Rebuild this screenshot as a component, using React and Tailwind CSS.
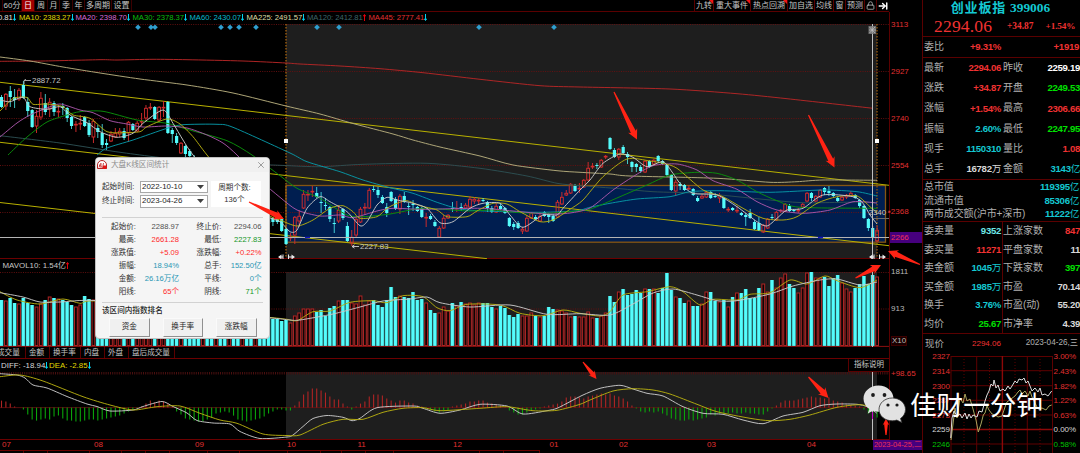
import clsx from 'clsx';
import { Lock, ArrowRightToLine, X } from 'lucide-react';

const STEP = 4.378;
const xOf = (i) => 1.5 + i * STEP;

// [rising, high, open/close top, open/close bottom, low] in chart units
const candles = [
    [0, 95, 97, 107, 108], [1, 93, 94, 106, 110], [0, 86, 91, 97, 107], [0, 89, 97, 100, 108], [1, 88, 90, 99, 101],
    [0, 81, 85, 98, 99], [0, 97, 102, 111, 117], [0, 109, 110, 127, 128], [1, 110, 116, 126, 133], [1, 92, 98, 117, 120],
    [0, 94, 103, 112, 115], [1, 98, 102, 109, 117], [0, 101, 103, 112, 116], [1, 106, 111, 112, 117], [0, 103, 106, 108, 115],
    [0, 107, 108, 118, 122], [0, 116, 117, 126, 129], [1, 121, 124, 125, 132], [1, 115, 123, 124, 130], [0, 116, 117, 126, 127],
    [0, 120, 123, 135, 137], [1, 119, 121, 137, 143], [0, 125, 128, 132, 138], [0, 124, 133, 145, 148], [0, 139, 143, 145, 150],
    [1, 131, 134, 141, 142], [1, 128, 133, 137, 138], [1, 128, 131, 134, 137], [0, 128, 131, 138, 140], [1, 121, 122, 133, 142],
    [0, 123, 124, 130, 131], [1, 121, 123, 131, 132], [1, 113, 121, 122, 126], [1, 105, 108, 118, 122], [1, 103, 107, 108, 110],
    [0, 106, 107, 119, 120], [1, 106, 107, 120, 122], [1, 101, 107, 108, 117], [0, 101, 102, 133, 134], [0, 128, 130, 134, 143],
    [0, 133, 136, 143, 145], [1, 142, 143, 153, 154], [0, 145, 146, 154, 157], [0, 149, 151, 156, 160], [0, 155, 158, 164, 166],
    [0, 161, 163, 170, 172], [1, 164, 166, 170, 173], [0, 165, 167, 176, 178], [0, 172, 174, 180, 183], [1, 172, 176, 182, 184],
    [0, 175, 178, 186, 188], [0, 183, 185, 190, 194], [1, 182, 185, 191, 193], [0, 187, 189, 197, 199], [0, 194, 196, 204, 206],
    [1, 196, 199, 203, 205], [0, 198, 201, 209, 211], [0, 205, 208, 214, 216], [1, 208, 210, 214, 217], [0, 210, 212, 218, 220],
    [0, 213, 215, 220, 222], [0, 216, 218, 223, 225], [0, 217, 218, 222, 226], [0, 217, 219, 222, 224], [0, 217, 219, 231, 232],
    [0, 228, 229, 244, 245], [1, 233, 237, 238, 241], [1, 216, 217, 235, 244], [1, 210, 216, 221, 227], [1, 190, 194, 208, 209],
    [1, 190, 194, 195, 201], [1, 186, 191, 192, 197], [0, 187, 193, 197, 198], [0, 192, 202, 203, 213], [0, 198, 205, 206, 210],
    [0, 206, 207, 219, 222], [0, 218, 223, 224, 233], [1, 205, 210, 221, 223], [0, 208, 209, 218, 220], [0, 222, 226, 241, 242],
    [1, 230, 237, 243, 246], [1, 217, 219, 235, 237], [1, 207, 209, 222, 223], [1, 203, 207, 208, 215], [1, 188, 190, 208, 209],
    [0, 186, 189, 190, 192], [0, 187, 190, 195, 198], [0, 195, 197, 203, 204], [0, 203, 207, 213, 217], [0, 191, 192, 201, 202],
    [0, 197, 199, 209, 210], [1, 194, 196, 209, 214], [0, 192, 196, 202, 203], [0, 203, 206, 207, 215], [0, 200, 204, 205, 211],
    [0, 206, 207, 211, 212], [0, 207, 208, 217, 218], [1, 213, 217, 218, 227], [0, 214, 216, 219, 220], [0, 220, 222, 226, 227],
    [1, 226, 228, 237, 238], [1, 215, 218, 228, 229], [1, 214, 215, 218, 219], [0, 202, 208, 209, 212], [1, 201, 208, 209, 212],
    [0, 203, 207, 208, 211], [1, 203, 205, 208, 209], [1, 196, 199, 207, 208], [1, 197, 199, 201, 204], [1, 198, 200, 201, 205],
    [0, 198, 200, 201, 202], [0, 201, 202, 208, 212], [0, 206, 208, 212, 213], [1, 203, 206, 212, 213], [0, 204, 206, 209, 210],
    [0, 207, 208, 213, 214], [0, 217, 218, 226, 227], [0, 222, 224, 227, 230], [0, 221, 223, 228, 229], [1, 227, 229, 231, 234],
    [1, 215, 218, 231, 232], [1, 212, 213, 218, 219], [0, 215, 217, 219, 220], [1, 212, 216, 221, 222], [0, 211, 212, 216, 217],
    [0, 213, 215, 217, 223], [0, 214, 216, 221, 222], [1, 200, 202, 217, 218], [1, 192, 197, 204, 205], [1, 190, 193, 195, 196],
    [1, 183, 184, 193, 194], [0, 184, 186, 191, 192], [1, 183, 188, 189, 193], [1, 179, 180, 187, 188], [1, 162, 168, 180, 181],
    [1, 163, 166, 167, 169], [0, 163, 165, 166, 169], [1, 159, 160, 167, 168], [1, 155, 156, 157, 159], [0, 137, 138, 149, 150],
    [0, 148, 150, 157, 158], [1, 148, 149, 157, 160], [0, 145, 147, 153, 154], [0, 152, 154, 157, 164], [0, 161, 162, 167, 172],
    [0, 163, 164, 167, 172], [0, 165, 167, 171, 173], [1, 160, 161, 172, 173], [0, 160, 161, 167, 168], [1, 159, 160, 164, 165],
    [0, 155, 156, 161, 162], [0, 160, 161, 164, 165], [0, 164, 165, 175, 177], [0, 174, 175, 190, 191], [1, 180, 182, 191, 196],
    [0, 182, 184, 186, 190], [0, 184, 185, 190, 191], [1, 185, 188, 189, 190], [0, 188, 189, 195, 196], [0, 196, 198, 201, 202],
    [1, 193, 196, 198, 199], [1, 191, 192, 197, 198], [0, 191, 192, 198, 199], [0, 193, 196, 197, 198], [1, 193, 195, 198, 203],
    [0, 197, 198, 208, 209], [1, 207, 209, 210, 212], [0, 207, 208, 210, 211], [1, 206, 210, 211, 213], [0, 212, 213, 215, 216],
    [0, 213, 215, 217, 226], [0, 209, 213, 218, 219], [0, 220, 222, 229, 230], [0, 217, 223, 230, 231], [1, 224, 225, 232, 233],
    [1, 218, 219, 228, 229], [0, 214, 217, 218, 220], [1, 211, 212, 220, 221], [1, 209, 210, 211, 213], [1, 203, 204, 211, 212],
    [0, 204, 206, 211, 212], [0, 209, 210, 211, 213], [1, 208, 210, 211, 213], [1, 203, 204, 207, 208], [1, 192, 193, 201, 202],
    [0, 192, 193, 198, 201], [1, 195, 196, 201, 202], [1, 189, 190, 197, 198], [0, 187, 188, 192, 195], [0, 186, 191, 193, 196],
    [0, 192, 193, 196, 197], [0, 196, 198, 201, 202], [1, 196, 197, 200, 201], [1, 194, 195, 197, 199], [1, 191, 193, 196, 197],
    [0, 194, 195, 198, 199], [0, 199, 200, 206, 208], [0, 205, 206, 218, 219], [0, 218, 219, 228, 231], [0, 226, 228, 238, 240],
    [1, 226, 230, 241, 242],
];

const volumes = [
    46, 45, 48, 43, 42, 48, 43, 41, 39, 42, 46, 49, 48, 47, 46, 44, 41, 39, 41, 50, 47, 46, 40, 44, 42, 38, 36, 39, 35, 37,
    34, 38, 36, 40, 37, 33, 35, 42, 46, 40, 38, 35, 33, 36, 32, 30, 31, 33, 29, 27, 30, 28, 26, 29, 31, 27, 25, 27, 26, 28,
    27, 28, 27, 27, 25, 26, 23, 30, 33, 37, 37, 37, 34, 36, 30, 38, 40, 45, 46, 46, 43, 42, 50, 41, 45, 46, 41, 39, 46, 59,
    49, 50, 49, 48, 54, 46, 47, 43, 36, 33, 33, 39, 35, 43, 40, 44, 42, 43, 41, 43, 43, 43, 39, 37, 40, 38, 31, 29, 32, 30,
    30, 33, 30, 29, 30, 39, 37, 36, 35, 33, 29, 30, 29, 29, 34, 28, 28, 30, 33, 50, 44, 54, 57, 51, 52, 56, 53, 57, 57, 57,
    53, 58, 73, 56, 49, 48, 43, 45, 40, 40, 42, 54, 54, 45, 44, 46, 39, 49, 53, 53, 57, 48, 48, 58, 62, 54, 66, 58, 68, 72,
    62, 58, 53, 58, 73, 74, 68, 68, 69, 60, 68, 71, 63, 57, 54, 58, 62, 70, 62, 71, 69,
];

const macd = [
    7, 6, 4, 1, 0, -2, -7, -12, -13, -12, -11, -12, -9, -8, -11, -13, -13, -14, -14, -13, -12, -12, -13, -12, -11, -10, -9, -8, -6, -4,
    -2, -1, 1, 4, 7, 5, 7, 6, 4, 1, -4, -7, -11, -12, -13, -14, -14, -12, -10, -6, -5, -4, -5, -8, -12, -13, -14, -13, -12, -11,
    -9, -6, -4, -2, -2, -3, -3, 2, 6, 13, 16, 19, 19, 17, 15, 11, 8, 8, 4, 1, -2, 1, 4, 6, 11, 13, 13, 12, 9, 7,
    5, 7, 7, 5, 4, 2, 1, -1, -2, -4, -5, -4, -3, 1, 2, 3, 4, 6, 6, 7, 7, 5, 4, 3, 2, 1, -3, -5, -7, -7,
    -5, -3, -2, -1, 1, 2, 3, 4, 6, 10, 11, 11, 10, 9, 11, 12, 13, 14, 13, 14, 12, 11, 9, 6, 2, -1, -4, -5, -4, -5,
    -4, -6, -8, -11, -12, -13, -13, -12, -13, -12, -11, -10, -7, -8, -6, -6, -6, -5, -6, -6, -5, -6, -6, -7, -7, -4, -1, 2, 5, 7,
    7, 7, 8, 9, 10, 11, 10, 10, 9, 10, 7, 6, 5, 3, 2, 2, 1, -2, -6, -9, -10,
];

const priceLines = [
    { color: '#b52626', pts: '0,61.3 43,61 100,59.7 117,60 153,59.3 187,59.7 243,61 286,63 300,64 340,66 380,68.7 423,72.7 480,79.3 540,85.7 580,87 670,89 737,93.7 787,98.7 873,108.3' },
    { color: '#b5ad7c', pts: '0,57 30,61 63,67 100,73 140,79 187,85 233,93 286,106 320,114 353,123.5 393,134 413,140 440,147 480,156 513,165 557,170.7 580,172.3 610,174 630,176 717,178.3 770,182.3 797,181.7 823,180 877,180.3' },
    { color: '#2c4f52', pts: '0,135.7 60,143 123,152.7 200,162 280,165.3 320,166.7 363,164.3 427,163.3 480,168.3 527,176 557,183.3 580,185.7 620,188.7 653,191.7 703,193.5 760,199 803,202.7 863,202 877,203' },
    { color: '#0797a5', pts: '97,155 107,148 133,140 167,128.3 183,124.7 217,124.3 233,127.3 290,153 307,161.7 340,171.7 363,180 390,187.7 413,193.3 440,203.3 467,210 533,212.3 575,211 590,207.3 610,203.3 637,199 670,196.7 690,191.7 720,190.7 770,192.3 823,190 857,191.7 877,196' },
    { color: '#0b8f0b', pts: '8,155 27,137 47,122 67,115 80,111.7 103,111.3 137,120 167,123.3 187,129.3 227,140.7 252,155 280,175.7 297,188.3 320,198.3 347,215 363,216.7 390,214 423,208.3 467,211 493,210 520,212.7 547,213.3 575,211 590,209.3 620,196.7 647,185 670,175 697,172.3 717,173.3 737,180 757,191.7 777,200.7 800,207.3 877,208.3' },
    { color: '#a955a9', pts: '0,137 17,123 30,115 47,108 60,104 80,110 93,112.7 110,120.7 127,124 143,127 167,126 187,128 207,135 223,143 237,155 260,180 280,197.3 297,210 320,216 340,215 353,217.7 377,211 393,208.3 423,209.3 480,208.3 513,211 547,214 570,213 590,208 613,190 633,176.7 653,165.7 677,164 697,170 713,180.7 737,189.3 757,201.7 777,210 803,213.3 830,210 853,201.7 877,203' },
    { color: '#b5ad10', pts: '0,111 13,98.5 27,97.5 33,104.3 47,104 63,106.7 73,115 90,118.3 107,131.7 123,132.7 140,131.7 147,126.7 167,119 180,124 193,136.7 207,155 240,195 270,216 280,220 297,226 313,220 330,208.3 343,205.7 353,211.7 360,218.3 377,216.7 387,208.3 397,203.3 407,200.7 420,205.7 437,210 447,216.7 467,216.7 477,211 493,203.3 507,204 520,211.7 540,221.7 553,220 563,214 570,209.3 583,200 603,176.7 627,159 650,161 663,163.3 677,168.3 703,190 723,196.7 743,208.3 763,218.3 783,220 797,216.7 817,203.3 837,196.7 857,196 870,206.7 877,213' },
    { color: '#c8c8c8', pts: '0,100 10,101.7 23,97.3 30,106.7 47,109.3 60,106.7 70,115 87,122.7 100,131.7 117,137.3 133,133.3 143,123.3 163,110 173,123.3 183,140 193,155 220,185 262,214 280,221.7 290,231.7 297,230 307,208.3 320,196.7 330,201.7 347,211.7 360,225.7 367,221.7 377,205 387,197.3 397,200 413,203.3 427,208.3 440,222.7 453,221.7 470,208.3 483,203.3 500,203.3 510,215 523,227.3 543,215 557,215 563,208.3 580,190 590,180 603,163.3 620,154 633,157.3 647,166.7 663,161.7 673,173.3 680,183.3 693,193.3 717,195 737,206.7 757,221.7 767,226 777,218.3 787,210 803,208.3 823,195 853,196.7 863,203.3 870,215 877,224' },
];

const volumeLines = [
    { color: '#b5ad10', pts: '0,291.7 17,300 40,304 63,299 80,303.3 95,301 180,310 272,317.7 287,319.3 297,320.7 313,311.7 330,311 350,302.3 373,300.7 387,302.7 403,295.7 423,296.7 437,307.7 450,310.7 467,304.3 500,305 520,313.3 543,315.7 563,310 580,313.3 600,316 610,311.7 623,295 647,291.7 670,286.7 683,291.7 700,305 713,299.3 737,300 750,294.3 770,292.7 790,280 807,284 825,276 837,280.7 860,287.7 877,280' },
    { color: '#c8c8c8', pts: '0,292.7 23,297 40,302 60,302 95,300.5 180,309 272,318 290,320 300,320 333,314 360,307 383,301 410,299 427,297 440,302.7 470,307 510,305 547,314.3 580,313.7 610,315 633,304 653,293 673,289 697,295 717,300.7 737,300.7 770,294 793,286 820,280 837,279 860,285 877,282' },
];

const macdLines = [
    { color: '#c8c8c8', pts: '0,373.7 17,375 25,378 33,385 47,388 67,396.5 87,404 97,406.5 110,411 133,410 143,406.5 162,401.5 173,406.5 187,413 197,420.5 213,423 230,424 240,431.5 260,438.5 287,437 293,435 303,426.5 313,418.5 327,415.5 343,417.3 352,420.7 360,418.3 377,407.7 413,406 423,408.3 440,413.3 460,410 480,404.3 507,406 523,414 547,410.7 557,408.3 570,401.7 583,395 600,388.3 620,385.3 633,389 647,393.3 663,396 683,406.7 703,413.3 723,414.3 743,420 763,423.7 783,416 803,412.3 820,405.7 837,404 857,404.3 867,406.7 877,413.3' },
    { color: '#b5ad10', pts: '0,376.7 20,375 43,381 83,396.7 110,405 133,410 157,406.7 180,406 200,413.3 220,420 237,423.3 263,434 287,435.5 300,435 323,424.3 343,419.3 363,419.3 383,412.3 403,408.3 423,407.7 440,410.7 480,408.3 507,406.7 533,410.7 557,410.3 580,404.3 590,400 613,391 633,388.7 653,390 670,394 697,404.3 717,411.7 750,418.3 770,420.7 790,419.3 810,415 837,407.3 860,404.7 877,408.3' },
];

const smooth = (pts) => {
    const p = pts.split(' ').map((s) => s.split(',').map(Number));
    let d = `M${p[0][0]} ${p[0][1]}`;
    for (let i = 0; i < p.length - 1; i++) {
        const a = p[i - 1] || p[i];
        const b = p[i];
        const c = p[i + 1];
        const e = p[i + 2] || c;
        d += `C${b[0] + (c[0] - a[0]) / 8} ${b[1] + (c[1] - a[1]) / 8} ${c[0] - (e[0] - b[0]) / 8} ${c[1] - (e[1] - b[1]) / 8} ${c[0]} ${c[1]}`;
    }
    return d;
};

const Lines = ({ items }) => items.map((l) => <path key={l.color} d={smooth(l.pts)} fill="none" stroke={l.color} strokeWidth="0.95" />);

const GridLine = ({ y, to = 889 }) => <line x1="0" x2={to} y1={y} y2={y} stroke="#6b1010" strokeWidth="0.9" strokeDasharray="1 1.3" />;

const RangeMark = ({ x }) => (
    <g stroke="#e8e8e8" strokeWidth="1" fill="#e8e8e8">
        <path d={`M${x} 254.5v5M${x + 5.5} 254.5v5M${x - 4} 257h4M${x + 6} 257h5`} fill="none" strokeWidth="1" />
        <path d={`M${x - 5} 257l3.500-2.500v5zM${x + 12} 257l-3.500-2.500v5z`} stroke="none" />
    </g>
);

const PriceChart = () => (
    <svg className="block shrink-0" width="889" height="235" viewBox="0 24 889 235">
        <rect x="286" y="24" width="591" height="235" fill="#1e1e1e" />
        <rect x="286" y="185.5" width="599.5" height="56.7" fill="#001e50" stroke="#855512" strokeWidth="1.3" />
        {[24.5, 71.5, 118.5, 165.5, 212.5].map((y) => <GridLine key={y} y={y} />)}
        <line x1="0" x2="889" y1="258.5" y2="258.5" stroke="#6b0000" />
        <line x1="286" x2="286" y1="24" y2="258" stroke="#a8640f" strokeWidth="1.3" strokeDasharray="1.6 1.4" />
        <line x1="877" x2="877" y1="24" y2="258" stroke="#7d4d10" strokeWidth="1.6" strokeDasharray="1.6 1.4" />
        <g stroke="#b8b000" strokeWidth="1">
            <line x1="0" y1="82.3" x2="889" y2="185.3" />
            <line x1="0" y1="142.3" x2="889" y2="245.7" />
            <line x1="0" y1="202.5" x2="487" y2="258.7" />
        </g>
        {candles.map(([up, h, t, b, l], i) => {
            const x = xOf(i);
            return up ? (
                <g key={i} stroke="#d22c2c" fill="none" strokeWidth="0.95">
                    <path d={`M${x} ${h}V${t}M${x} ${b}V${l}`} />
                    <rect x={x - 1.4} y={t + 0.3} width="2.8" height={Math.max(b - t - 0.3, 0.6)} />
                </g>
            ) : (
                <g key={i} fill="#54fcfc">
                    <rect x={x - 0.45} y={h} width="0.9" height={l - h} opacity="0.85" />
                    <rect x={x - 1.6} y={t} width="3.2" height={b - t} />
                </g>
            );
        })}
        <Lines items={priceLines} />
        <line x1="0" x2="889" y1="237.5" y2="237.5" stroke="#b4b4b4" strokeWidth="1" />
        <rect x="305" y="236.8" width="5" height="1.4" fill="#1414c8" />
        <rect x="818" y="236.8" width="5" height="1.4" fill="#1414c8" />
        <line x1="872.5" x2="872.5" y1="24" y2="259" stroke="#c0c0c0" strokeWidth="1" />
        <line x1="873" x2="889" y1="218.5" y2="218.5" stroke="#6c6c6c" />
        {[138, 151, 155, 221, 230, 239, 256, 317, 339, 479, 554].map((x) => (
            <path key={x} d={`M${x - 2.8} 27.2l2.8-2.8 2.8 2.8-2.8 2.8z`} fill="#2f9fd0" />
        ))}
        <rect x="284" y="139" width="4" height="4" fill="#fff" />
        <rect x="875" y="139" width="4" height="4" fill="#fff" />
        <rect x="868.5" y="26" width="7.5" height="8" fill="#6e6e6e" />
        <path d="M869.5 27l5.5 6M875 27l-5.5 6M872.3 26.5v7M869 30h7" stroke="#c4c4c4" strokeWidth="0.7" />
        <RangeMark x={283} />
        <RangeMark x={874} />
        <path d="M24 84v-3.5h7M24 80.5l2-1.2" stroke="#b0b0b0" fill="none" strokeWidth="0.9" />
        <path d="M352 246.5h7M352 246.5l2.5-1.6M352 246.5l2.5 1.6" stroke="#d0d0d0" fill="none" strokeWidth="0.9" />
        <g fontSize="7.9" fill="#c4c4c4">
            <text x="32" y="83">2887.72</text>
            <text x="360" y="249">2227.83</text>
            <text x="868.5" y="215">2340</text>
        </g>
    </svg>
);

const VolumeChart = () => (
    <svg className="block shrink-0" width="889" height="75" viewBox="0 272 889 75">
        <rect x="286" y="272" width="591" height="74" fill="#1e1e1e" />
        <GridLine y={272.5} />
        <GridLine y={309} />
        {volumes.map((v, i) => {
            const x = xOf(i);
            return candles[i][0] ? (
                <rect key={i} x={x - 1.4} y={346 - v} width="2.8" height={v - 0.5} fill="#0c0505" stroke="#b02424" strokeWidth="1" />
            ) : (
                <g key={i}>
                    <rect x={x - 2} y={346 - v} width="4" height={v} fill="#2b8585" />
                    <rect x={x - 1.6} y={346 - v} width="3" height={v} fill="#54fcfc" />
                </g>
            );
        })}
        <line x1="0" x2="889" y1="346.4" y2="346.4" stroke="#8c0f0f" />
        <Lines items={volumeLines} />
        <line x1="872.5" x2="872.5" y1="272" y2="347" stroke="#c0c0c0" />
    </svg>
);

const MacdChart = () => (
    <svg className="block shrink-0" width="889" height="68" viewBox="0 372 889 68">
        <rect x="286" y="372" width="591" height="67" fill="#1e1e1e" />
        <line x1="0" x2="889" y1="373.3" y2="373.3" stroke="#4a0f0f" strokeWidth="2.4" strokeDasharray="1 1.2" />
        <line x1="0" x2="877" y1="407.6" y2="407.6" stroke="#6b1010" strokeWidth="0.8" />
        {macd.map((v, i) => (
            <line key={i} x1={xOf(i)} x2={xOf(i)} y1="407.6" y2={407.6 - v} stroke={v > 0 ? '#b02424' : '#0aa50a'} strokeWidth="1.1" />
        ))}
        <Lines items={macdLines} />
        <line x1="0" x2="889" y1="439.5" y2="439.5" stroke="#6b0000" />
        <line x1="872.5" x2="872.5" y1="372" y2="440" stroke="#c0c0c0" />
        <line x1="872.5" x2="872.5" y1="412" y2="419" stroke="#c800c8" />
    </svg>
);

const Toolbar = () => (
    <div className="flex h-3 items-stretch border-b border-[#5a0000] text-[8px] leading-[11px] text-[#c4c4c4]">
        {[
            ['60分', 'w-[20px] ml-[2px] border-l'],
            ['日', 'w-[13px] bg-[#a00000] text-white'],
            ['周', 'w-[13px]'],
            ['月', 'w-[12px]'],
            ['季', 'w-[13px]'],
            ['年', 'w-[12px]'],
            ['多周期', 'w-[27px]'],
            ['设置', 'w-[20px]'],
        ].map(([name, cls]) => (
            <span key={name} className={clsx('shrink-0 whitespace-nowrap border-r border-[#3c0000] text-center', cls)}>{name}</span>
        ))}
        <div className="grow" />
        {[
            ['九转', 'w-[20px] border-l', true],
            ['重大事件', 'w-[37px]', true],
            ['热点回溯', 'w-[37px]', true],
            ['加自选', 'w-[27px]'],
            ['均线', 'w-[19px]'],
            ['窗', 'w-[12px]'],
            ['预测', 'w-[19px]'],
        ].map(([name, cls, hot]) => (
            <span key={name} className={clsx('relative shrink-0 whitespace-nowrap border-r border-[#5a0000] text-center', cls)}>
                {name}
                {hot && (
                    <svg className="absolute right-0 top-0" width="4" height="4">
                        <path d="M0 0h4v4z" fill="#f01414" />
                    </svg>
                )}
            </span>
        ))}
        <span className="flex w-[12px] items-center justify-center border-r border-[#5a0000]"><Lock size={9} /></span>
        <span className="flex w-[12px] items-center justify-center text-white"><ArrowRightToLine size={10} strokeWidth={3.5} /></span>
    </div>
);

const Arrow = ({ c }) => (
    <svg className={clsx('inline-block align-[-1px]', c)} width="3" height="7" viewBox="0 0 3 7">
        <path d="M1.500 0v6M0 4.500l1.500 2 1.500-2" fill="none" stroke="currentColor" strokeWidth="1" />
    </svg>
);

const UpArrow = () => (
    <svg className="inline-block align-[-1px] text-red-600" width="3" height="7" viewBox="0 0 3 7">
        <path d="M1.500 7V1M0 2.500l1.500-2 1.500 2" fill="none" stroke="currentColor" strokeWidth="1" />
    </svg>
);

const Legend = () => (
    <div className="flex h-3 items-center whitespace-nowrap text-[7.7px] leading-none tracking-[-0.05px]">
        <span className="w-[19px] shrink-0 -indent-[2px] text-[#e0e0e0]">0.81<Arrow c="text-cyan-400" /></span>
        <span className="w-[56.5px] shrink-0 text-[#e0d800]">MA10: 2383.27<Arrow c="text-cyan-400" /></span>
        <span className="w-[57px] shrink-0 text-[#d86cd8]">MA20: 2398.70<Arrow c="text-cyan-400" /></span>
        <span className="w-[57px] shrink-0 text-[#0cbc0c]">MA30: 2378.37<Arrow c="text-cyan-400" /></span>
        <span className="w-[57px] shrink-0 text-[#0abccc]">MA60: 2430.07<Arrow c="text-cyan-400" /></span>
        <span className="w-[60.5px] shrink-0 text-[#dcdca4]">MA225: 2491.57<Arrow c="text-cyan-400" /></span>
        <span className="w-[61.5px] shrink-0 text-[#3d666a]">MA120: 2412.81<UpArrow /></span>
        <span className="text-[#e03030]">MA445: 2777.41<Arrow c="text-cyan-400" /></span>
    </div>
);

const PriceAxis = () => (
    <div className="flex h-full w-[33px] shrink-0 flex-col">
        <div className="h-[12px]" />
        <div className="flex h-[438px] flex-col border-l border-[#5a0000] pl-[1px] text-[8px] leading-none text-[#e03030]">
            <div className="mb-[11px] flex h-[25px] items-center">3113</div>
            <div className="flex h-[47px] items-center">2927</div>
            <div className="flex h-[47px] items-center">2740</div>
            <div className="flex h-[47px] items-center">2554</div>
            <div className="flex h-[43px] items-center pt-[3px]"><span className="-ml-[3px]">▪2368</span></div>
            <div className="-ml-[1px] flex h-[11px] items-center bg-[#46007e] pl-[1px] text-[#f03058]">2266</div>
            <div className="flex h-[58px] items-center text-[#b8b8b8]">1811</div>
            <div className="flex h-[16px] items-center text-[#b8b8b8]">913</div>
            <div className="flex h-[48px] items-center text-[#b8b8b8]"><span className="border border-[#3c0000] bg-[#1a0000]">X10</span></div>
            <div className="flex h-[18px] items-center">+98.65</div>
        </div>
    </div>
);

const IndicatorTabs = () => (
    <div className="flex h-3 border-b border-[#6b0000] text-[7.6px] leading-[12px] text-[#c4c4c4]">
        {[
            ['成交量', 'w-[26px] -indent-[3px]'],
            ['金额', 'w-[24px] pl-[3px]'],
            ['换手率', 'w-[31px] pl-[3px]'],
            ['内盘', 'w-[24px] pl-[3px]'],
            ['外盘', 'w-[24px] pl-[3px]'],
            ['盘后成交量', 'w-[46px] pl-[3px]'],
        ].map(([name, cls]) => (
            <span key={name} className={clsx('shrink-0 whitespace-nowrap border-r border-[#5a0000]', cls)}>{name}</span>
        ))}
    </div>
);

const DateAxis = () => (
    <div className="flex h-[10px] pl-[2px] text-[8px] leading-[10px] text-[#e03030]">
        <span className="w-[92px]">07</span>
        <span className="w-[101px]">08</span>
        <span className="w-[92px]">09</span>
        <span className="w-[70.5px]">10</span>
        <span className="w-[95.5px]">11</span>
        <span className="w-[96.5px]">12</span>
        <span className="w-[69.5px]">01</span>
        <span className="w-[88px]">02</span>
        <span className="w-[100px]">03</span>
        <span>04</span>
    </div>
);

const StatRow = ({ cls, l, lv, lc, r, rv, rc }) => (
    <div className={clsx('grid grid-cols-[77px_77px] items-center gap-x-[2px]', cls)}>
        <div className="flex items-center justify-between">
            <span>{l}</span>
            <span className={clsx('text-[9.6px] font-bold tracking-[-0.3px]', lc)}>{lv}</span>
        </div>
        <div className="flex items-center justify-between">
            <span>{r}</span>
            <span className={clsx('text-[9.6px] font-bold tracking-[-0.3px]', rc)}>{rv}</span>
        </div>
    </div>
);

const R = 'text-[#f03232]';
const G = 'text-[#00e000]';
const C = 'text-[#14c8d2]';
const W = 'text-[#d8d8d8]';

const MiniChart = () => (
    <svg className="block" width="157" height="104" viewBox="923 349 157 104">
        <g stroke="#5e0000" strokeWidth="1" fill="none">
            <path d="M951 356.5H1052.5M951 370.7H1052.5M951 385.7H1052.5M951 400.3H1052.5M951 415H1052.5M951 444H1052.5" />
            <path d="M951 356V453M976.7 356V453M1027.3 356V453M1052.5 356V453" />
            <path d="M964 356V453M989.5 356V453M1015 356V453M1040 356V453" strokeDasharray="1 2" />
            <path d="M951 429.5H1052.5M1002.4 356V453" stroke="#8c0808" strokeWidth="1.4" />
        </g>
        <path
            d="M951 440L953 424L955 408L957 418L960 398L963 403L965 394L967 401L970 399L973 409L976 420L978.3 432L981 424L983.3 415L985 413L987 406L989 410L992 414L995 415L998 417L1002 416L1005 407L1007 402L1011 399L1015 396L1018 392L1020 390L1022 394L1025 391L1028 396L1030 391L1032 397L1036 405L1038 409L1042 408L1046 410L1049 406L1051.7 405"
            fill="none" stroke="#a8a45c" strokeWidth="1"
        />
        <path
            d="M950.7 438L952 418L954 411L957 416L960 414L962 418L965 413L967 419L969 414L971 418L973 415L977 417L979 411L982 412L985 401L987 395L989 391L991 384L993 386L994 380L996 388L998 385L1000 391L1003 389L1005 391L1008 386L1010 389L1012 386L1015 381L1017 383L1019 379L1022 380L1024 378L1026 383L1028 381L1030 386L1032 391L1035 388L1038 392L1040 388L1042 395L1045 394L1048 396L1051.7 391"
            fill="none" stroke="#dcdcdc" strokeWidth="1"
        />
        <g fontSize="8">
            {[
                ['2327', '3.00%', 356.5, '#e03030'],
                ['2314', '2.43%', 370.7, '#e03030'],
                ['2300', '1.82%', 385.7, '#e03030'],
                ['2287', '1.22%', 400.3, '#e03030'],
                ['2273', '0.63%', 415, '#e03030'],
                ['2259', '0.00%', 429.5, '#d8d8d8'],
                ['2246', '0.58%', 444, '#00c000'],
            ].map(([a, b, y, fill]) => (
                <g key={a} fill={fill}>
                    <text x="950" y={y + 2.8} textAnchor="end">{a}</text>
                    <text x="1053.5" y={y + 2.8}>{b}</text>
                </g>
            ))}
        </g>
    </svg>
);

const QuotePanel = () => (
    <div className="flex h-full w-[158px] shrink-0 flex-col overflow-hidden border-l border-[#5a0000] text-[10px] leading-none text-[#b0b0b0]">
        <div className="flex h-[15px] items-center justify-center pr-[2px] font-['Liberation_Serif','Noto_Sans_CJK_SC',serif] text-[13.4px] font-bold text-[#14c8d2]">
            <span className="mr-[4px] text-[13px] tracking-[0.8px]">创业板指</span>
            <span>399006</span>
        </div>
        <div className="flex h-[22px] items-center border-b border-[#5a0000] pl-[11px] pt-[3px] font-['Liberation_Serif',serif] text-[#f03232]">
            <span className="w-[73px] text-[17.5px] tracking-[0.2px]">2294.06</span>
            <span className="w-[38.5px] text-[9.4px] font-bold">+34.87</span>
            <span className="text-[9.2px] font-bold tracking-[-0.1px]">+1.54%</span>
        </div>
        <div className="flex h-[21px] items-center border-b border-[#5a0000] pl-[1px] pr-[1px]">
            <span className="w-[20px]">委比</span>
            <span className={clsx('w-[57px] text-right text-[9.6px] font-bold tracking-[-0.3px]', R)}>+9.31%</span>
            <span className={clsx('grow text-right text-[9.6px] font-bold tracking-[-0.3px]', R)}>+1919</span>
        </div>
        <div className="flex h-[122px] flex-col border-b border-[#5a0000] pl-[1px]">
            <StatRow cls="h-[20.4px]" l="最新" lv="2294.06" lc={R} r="昨收" rv="2259.19" rc="text-white" />
            <StatRow cls="h-[20.4px]" l="涨跌" lv="+34.87" lc={R} r="开盘" rv="2249.53" rc={G} />
            <StatRow cls="h-[20.4px]" l="涨幅" lv="+1.54%" lc={R} r="最高" rv="2306.66" rc={R} />
            <StatRow cls="h-[20.4px]" l="振幅" lv="2.60%" lc={C} r="最低" rv="2247.95" rc={G} />
            <StatRow cls="h-[20.4px]" l="现手" lv="1150310" lc={C} r="量比" rv="1.08" rc={R} />
            <StatRow cls="h-[20.4px]" l="总手" lv={<>16782<span className="font-normal">万</span></>} lc={W} r="金额" rv={<>3143<span className="font-normal">亿</span></>} rc={C} />
        </div>
        <div className="flex h-[42px] flex-col border-b border-[#5a0000] pl-[1px] pr-[1px]">
            {[['总市值', '119395'], ['流通市值', '85306'], ['两市成交额(沪市+深市)', '11222']].map(([k, v]) => (
                <div key={k} className="flex h-[14px] items-center justify-between whitespace-nowrap">
                    <span className="tracking-[-0.1px]">{k}</span>
                    <span className="text-[9.6px] font-bold tracking-[-0.3px] text-[#14c8d2]">{v}<span className="font-normal">亿</span></span>
                </div>
            ))}
        </div>
        <div className="flex h-[112px] flex-col border-b border-[#5a0000] bg-[linear-gradient(#5a0000,#5a0000)] bg-[length:1px_100%] bg-[position:79px_0] bg-no-repeat pl-[1px]">
            <StatRow cls="h-[18.7px]" l="委卖量" lv="9352" lc="text-[#6fe8e8]" r="上涨家数" rv="847" rc={R} />
            <StatRow cls="h-[18.7px]" l="委买量" lv="11271" lc={R} r="平盘家数" rv="11" rc={W} />
            <StatRow cls="h-[18.7px]" l="卖金额" lv={<>1045<span className="font-normal">万</span></>} lc={C} r="下跌家数" rv="397" rc={G} />
            <StatRow cls="h-[18.7px]" l="买金额" lv={<>1985<span className="font-normal">万</span></>} lc={C} r="市盈" rv="70.14" rc={W} />
            <StatRow cls="h-[18.7px]" l="换手" lv="3.76%" lc={C} r="市盈(动)" rv="55.20" rc={W} />
            <StatRow cls="h-[18.7px]" l="均价" lv="25.67" lc={G} r="市净率" rv="4.39" rc={W} />
        </div>
        <div className="flex h-[15px] shrink-0 items-center pl-[2px] pr-[2px] pt-[4px]">
            <span className="w-[47px] text-[9.4px]">现价</span>
            <span className="text-[8px] text-[#f03232]">2294.06</span>
            <span className="grow text-right text-[8.2px]">2023-04-26,三</span>
        </div>
        <MiniChart />
    </div>
);

const DateSelect = ({ label, value }) => (
    <div className="flex items-center">
        <span className="w-[38px] whitespace-nowrap">{label}</span>
        <span className="flex h-[12.5px] w-[68px] items-center justify-between border border-[#a8a8a8] bg-white pl-[1px] pr-[3px] text-[7.9px] text-[#1e1e1e]">
            {value}
            <svg width="7" height="4"><path d="M0 0h7l-3.5 4z" fill="#404040" /></svg>
        </span>
    </div>
);

const RangeDialog = () => (
    <div className="absolute left-[95px] top-[156.5px] flex h-[182px] w-[175px] flex-col overflow-hidden rounded-[4px] border border-[#c0c0c0] bg-[#f5f5f5] text-[7.6px] leading-none text-[#303030]">
        <div className="flex h-[14.5px] items-center bg-[#f0f0f0] pl-[1px] pr-[3px] text-[#8c8c8c]">
            <svg className="mr-[4px]" width="10" height="10" viewBox="0 0 10 10">
                <path d="M0.5 8.5V5a4.5 4.5 0 0 1 9 0v3.500z" fill="#fff" stroke="#b42020" />
                <path d="M2 7.500l1.500-4M4 8V3M5.500 8l1-5M2 5l2.500 1.500" stroke="#c83030" strokeWidth="0.9" />
                <path d="M6 5.500h3.500v3.500H6z" fill="#e01414" />
            </svg>
            <span className="grow">大盘K线区间统计</span>
            <X size={10} strokeWidth={2} />
        </div>
        <div className="flex justify-between pl-[6px] pr-[8px] pt-[8.5px]">
            <div className="flex flex-col gap-[2px]">
                <DateSelect label="起始时间:" value="2022-10-10" />
                <DateSelect label="终止时间:" value="2023-04-26" />
            </div>
            <div className="flex h-[26px] w-[50px] flex-col items-center justify-around bg-white py-[1px] pr-[3px]">
                <span>周期个数:</span>
                <span>136个</span>
            </div>
        </div>
        <div className="mx-[6px] mt-[9px] flex h-[86px] flex-col justify-around border-y border-[#d2d2d2] py-[3px]">
            {[
                ['起始价:', '2288.97', 'text-[#505050]', '终止价:', '2294.06', 'text-[#505050]'],
                ['最高:', '2661.28', 'text-[#ff2828]', '最低:', '2227.83', 'text-[#149628]'],
                ['涨跌值:', '+5.09', 'text-[#ff2828]', '涨跌幅:', '+0.22%', 'text-[#ff2828]'],
                ['振幅:', '18.94%', 'text-[#2896b4]', '总手:', '152.50亿', 'text-[#2896b4]'],
                ['金额:', '26.16万亿', 'text-[#2896b4]', '平线:', '0个', 'text-[#2896b4]'],
                ['阳线:', '65个', 'text-[#ff2828]', '阴线:', '71个', 'text-[#149628]'],
            ].map(([a, av, ac, b, bv, bc]) => (
                <div key={a} className="grid grid-cols-[34px_43px_42.5px_40px] whitespace-nowrap text-right">
                    <span>{a}</span>
                    <span className={ac}>{av}</span>
                    <span>{b}</span>
                    <span className={bc}>{bv}</span>
                </div>
            ))}
        </div>
        <div className="mt-[4px] pl-[6px] font-medium text-[#1e1e1e]">该区间内指数排名</div>
        <div className="mt-[3.5px] flex gap-[13px] pl-[13px] text-[#1e1e1e]">
            {['资金', '换手率', '涨跌幅'].map((b) => (
                <div key={b} className="flex h-[19px] w-[40.5px] items-center justify-center border border-b-[#909090] border-l-[#fafafa] border-r-[#909090] border-t-[#fafafa] bg-[#f0f0f0]">{b}</div>
            ))}
        </div>
    </div>
);

const Pointer = ({ from, to, head = 10, width = 10 }) => {
    const len = Math.hypot(to[0] - from[0], to[1] - from[1]);
    const angle = (Math.atan2(to[1] - from[1], to[0] - from[0]) * 180) / Math.PI;
    const neck = len - head;
    return (
        <path
            d={`M0 -0.6L${neck + 1.5} ${-width / 3.7}L${neck} ${-width / 2}L${len} 0L${neck} ${width / 2}L${neck + 1.5} ${width / 3.7}L0 0.6z`}
            fill="#ff2314"
            transform={`translate(${from[0]} ${from[1]}) rotate(${angle})`}
        />
    );
};

const Annotations = () => (
    <svg className="pointer-events-none absolute left-0 top-0" width="1080" height="453">
        <Pointer from={[614, 92]} to={[637, 139.5]} />
        <Pointer from={[808.5, 115]} to={[834.5, 167.5]} />
        <Pointer from={[249, 202]} to={[284, 219]} />
        <Pointer from={[920, 264.5]} to={[888, 251]} />
        <Pointer from={[855.5, 278]} to={[881, 265]} />
        <Pointer from={[583, 362]} to={[596.5, 379]} head={8} width={8} />
        <Pointer from={[808.5, 377]} to={[828.5, 398]} />
        <Pointer from={[886, 435]} to={[886, 418.5]} head={7} width={7} />
        <g fill="#e2e2e2">
            <path d="M878.5 385.5c-8.5 0-15 6-15 13.2 0 4.3 2.3 7.8 5.8 10.3l-1.5 4.5 5.3-2.7c1.8.6 3.5.9 5.4.9 8.4 0 15-5.8 15-13s-6.6-13.2-15-13.2z" />
            <path d="M892.3 398c-7.4 0-13.3 5-13.3 11.5s5.9 11.3 13.3 11.3c1.6 0 3.1-.2 4.5-.7l5 2.4-1.3-4c3-2 5-5.4 5-9 0-6.5-5.8-11.5-13.2-11.5z" stroke="#303030" strokeWidth="0.8" />
        </g>
        <g fill="#1c1c1c">
            <circle cx="873" cy="395" r="1.9" />
            <circle cx="884.5" cy="395" r="1.9" />
            <circle cx="888" cy="405" r="1.6" />
            <circle cx="897" cy="405" r="1.6" />
        </g>
    </svg>
);

const App = () => {
    return (
        <div className="relative flex h-[453px] w-[1080px] overflow-hidden bg-black font-['Liberation_Sans','Noto_Sans_CJK_SC',sans-serif]">
            <div className="flex w-[889px] shrink-0 flex-col overflow-hidden">
                <Toolbar />
                <Legend />
                <PriceChart />
                <div className="flex h-[13px] items-center pl-[2.5px] text-[7.9px] leading-none text-[#c8c8c8]">
                    MAVOL10: 1.54亿<UpArrow />
                </div>
                <VolumeChart />
                <IndicatorTabs />
                <div className="flex h-[13px] items-center text-[7.9px] leading-none">
                    <span className="w-[49px] whitespace-nowrap pl-[1px] text-[#d8d8d8]">DIFF: -18.94<Arrow c="text-cyan-400" /></span>
                    <span className="grow text-[#e0d800]">DEA: -2.85<Arrow c="text-cyan-400" /></span>
                    <span className="flex h-full w-[41px] items-center border-b border-l border-[#5a0000] pl-[5px] text-[7.5px] text-[#c8c8c8]">指标说明</span>
                </div>
                <MacdChart />
                <DateAxis />
                <div className="flex h-[3px] w-[540px] border-t border-[#6b0000]">
                    {[24, 24, 42, 32, 24, 24, 38, 32, 48, 33, 21, 24, 28, 86, 24, 36].map((w, i) => (
                        <span key={i} className="shrink-0 border-r border-[#5a0000]" style={{ width: w }} />
                    ))}
                </div>
            </div>
            <PriceAxis />
            <QuotePanel />
            <div className="absolute left-[873px] top-[440px] h-[10px] w-[49px] whitespace-nowrap bg-[#46007e] pl-[1px] text-[7.5px] leading-[10px] tracking-[-0.05px] text-[#f03058]">2023-04-25,二</div>
            <RangeDialog />
            <Annotations />
            <div className="absolute left-[910px] top-[390px] whitespace-nowrap text-[26.6px] leading-[32px] text-white">佳财一分钟</div>
        </div>
    );
};

export default App;
